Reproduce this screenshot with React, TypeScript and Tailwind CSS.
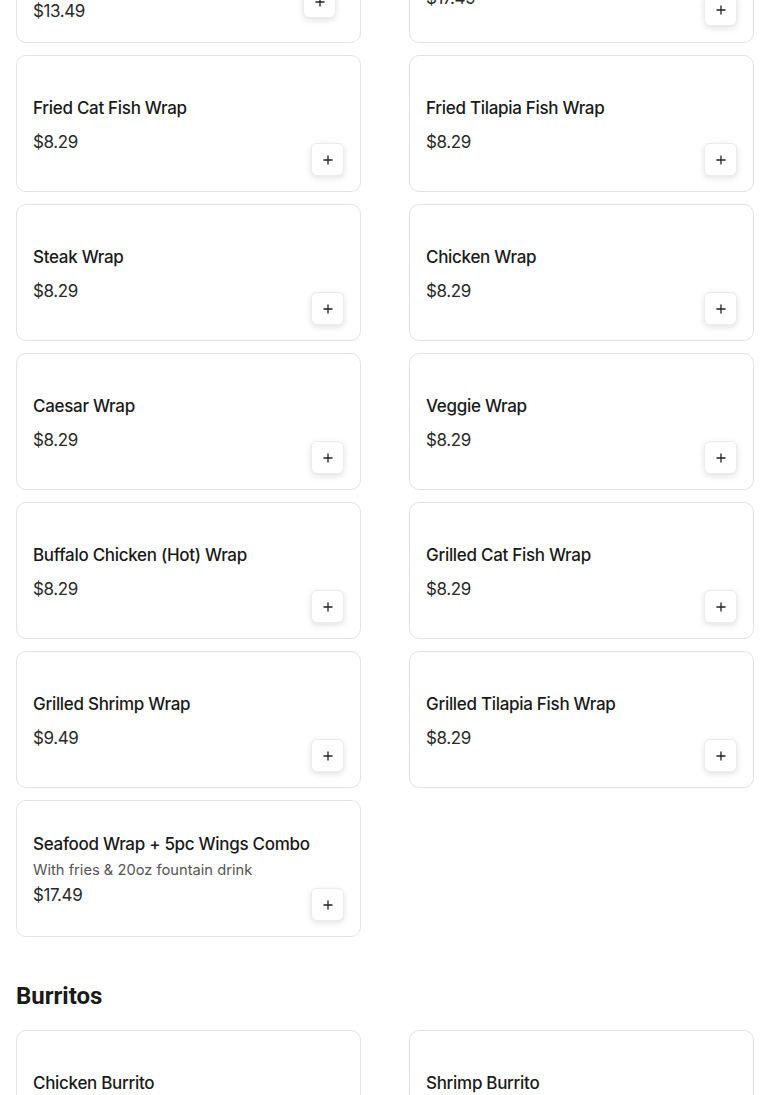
import { Plus } from "lucide-react";

type Item = {
  name: string;
  price: string;
  description?: string;
};

// Wraps section, shown from the second row (the first row sits half off screen).
const wraps: Item[] = [
  { name: "Fried Cat Fish Wrap", price: "$8.29" },
  { name: "Fried Tilapia Fish Wrap", price: "$8.29" },
  { name: "Steak Wrap", price: "$8.29" },
  { name: "Chicken Wrap", price: "$8.29" },
  { name: "Caesar Wrap", price: "$8.29" },
  { name: "Veggie Wrap", price: "$8.29" },
  { name: "Buffalo Chicken (Hot) Wrap", price: "$8.29" },
  { name: "Grilled Cat Fish Wrap", price: "$8.29" },
  { name: "Grilled Shrimp Wrap", price: "$9.49" },
  { name: "Grilled Tilapia Fish Wrap", price: "$8.29" },
  {
    name: "Seafood Wrap + 5pc Wings Combo",
    description: "With fries & 20oz fountain drink",
    price: "$17.49",
  },
];

const burritos: Item[] = [
  { name: "Chicken Burrito", price: "$8.29" },
  { name: "Shrimp Burrito", price: "$8.29" },
];

const font = "font-['Inter','Noto_Sans',sans-serif]";
const titleCls = "text-[17px] leading-[22px] font-medium tracking-[-0.3px] text-[#1a1a1a]";
const descCls = "text-[14.7px] leading-[20px] text-[#555]";
const priceCls = "text-[17px] leading-[22px] tracking-[-0.4px] text-[#2a2a2a]";

function AddButton({ className = "" }: { className?: string }) {
  return (
    <button
      type="button"
      aria-label="Add"
      className={`absolute flex h-[33px] w-[33px] items-center justify-center rounded-md border border-[#ececec] bg-white text-[#222] shadow-[0_2px_6px_rgba(0,0,0,0.12)] ${className}`}
    >
      <Plus className="h-3.5 w-3.5" strokeWidth={2.25} />
    </button>
  );
}

function ItemCard({ item }: { item: Item }) {
  return (
    <div className="relative flex min-h-[137px] flex-col justify-center rounded-[10px] border border-[#e3e3e3] bg-white px-4 pt-[26px] pb-6">
      <h3 className={titleCls}>{item.name}</h3>
      {item.description && (
        <p className={`mt-[5px] ${descCls}`}>{item.description}</p>
      )}
      <p className={`${item.description ? "mt-[4px]" : "mt-[12px]"} ${priceCls}`}>
        {item.price}
      </p>
      <AddButton className="bottom-[15px] right-4" />
    </div>
  );
}

export default function App() {
  return (
    <div className={`min-h-screen overflow-hidden bg-white ${font}`}>
      <div className="-mt-[99px] px-4">
        <div className="grid grid-cols-2 gap-x-12 gap-y-3">
          {/* first row, scrolled mostly out of view */}
          <div className="relative flex h-[142px] flex-col justify-end rounded-[10px] border border-[#e3e3e3] bg-white px-4 pb-[20px]">
            <h3 className={titleCls}>Seafood Wrap + 10pc Wings Combo</h3>
            <p className={`mt-[5px] ${descCls}`}>With fries & 20oz fountain drink</p>
            <p className={`mt-[5px] ${priceCls}`}>$13.49</p>
            <AddButton className="bottom-6 right-6" />
          </div>
          <div className="relative flex h-[142px] flex-col justify-end rounded-[10px] border border-[#e3e3e3] bg-white px-4 pb-[33px]">
            <h3 className={titleCls}>Seafood Wrap + 5pc Wings Combo</h3>
            <p className={`mt-[5px] ${priceCls}`}>$17.49</p>
            <AddButton className="bottom-4 right-4" />
          </div>

          {wraps.map((item) => (
            <ItemCard key={item.name} item={item} />
          ))}
        </div>

        <h2 className="mt-[45px] mb-[20px] font-['Roboto',sans-serif] text-[24px] leading-[28px] font-bold text-[#1a1a1a]">
          Burritos
        </h2>

        <div className="grid grid-cols-2 gap-x-12 gap-y-3">
          {burritos.map((item) => (
            <ItemCard key={item.name} item={item} />
          ))}
        </div>
      </div>
    </div>
  );
}
